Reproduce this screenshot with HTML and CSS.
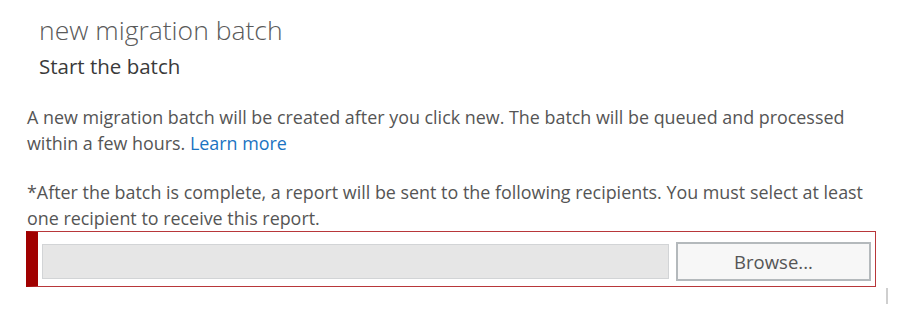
FILE: index.html
```html
<!DOCTYPE html>
<html>
<head>
<meta charset="utf-8">
<link rel="stylesheet" href="styles.css">
</head>
<body>
<div class="page">
  <div class="header">
    <h1 class="title">new migration batch</h1>
    <h2 class="subtitle">Start the batch</h2>
  </div>
  <p class="text">A new migration batch will be created after you click new. The batch will be queued and processed within a few hours. <a class="link" href="#">Learn more</a></p>
  <p class="text note">*After the batch is complete, a report will be sent to the following recipients. You must select at least one recipient to receive this report.</p>
  <div class="picker">
    <div class="field"></div>
    <button class="browse">Browse...</button>
  </div>
  <div class="tail"><span class="tick"></span></div>
</div>
</body>
</html>
```
FILE: styles.css
```css
html, body {
  margin: 0;
  padding: 0;
  background: #ffffff;
}
.page {
  width: 902px;
  height: 314px;
  padding: 0 0 0 26px;
  box-sizing: border-box;
  font-family: "Open Sans", "Noto Sans", sans-serif;
  color: #505050;
  overflow: hidden;
}
.header {
  padding: 12px 0 0 13px;
}
.title {
  margin: 0;
  font-size: 26.5px;
  font-weight: 300;
  line-height: 36px;
  color: #5a5a5a;
}
.subtitle {
  margin: 3px 0 0 0;
  font-size: 20.5px;
  font-weight: 400;
  line-height: 30px;
  color: #3a3a3a;
}
.text {
  margin: 23px 0 0 1px;
  width: 850px;
  font-size: 17.9px;
  line-height: 26px;
  color: #555555;
}
.note {
  margin-top: 23px;
}
.link {
  color: #1a73c2;
  text-decoration: none;
}
.picker {
  display: flex;
  align-items: flex-start;
  width: 850px;
  height: 56px;
  box-sizing: border-box;
  margin-top: 0;
  border: 1px solid #b8373a;
  border-left: 12px solid #a00000;
  padding: 0 4px 0 4px;
  gap: 7px;
}
.field {
  flex: 1;
  height: 35px;
  margin-top: 12px;
  box-sizing: border-box;
  background: #e6e6e6;
  border: 1px solid #d2d4d6;
}
.browse {
  width: 195px;
  height: 39px;
  margin-top: 10px;
  box-sizing: border-box;
  background: #f7f7f7;
  border: 2px solid #b4b9bc;
  font-family: "Open Sans", "Noto Sans", sans-serif;
  font-size: 18.5px;
  color: #555555;
  padding: 0;
}
.tail {
  display: flex;
  justify-content: flex-end;
  width: 862px;
}
.tick {
  display: block;
  width: 2px;
  height: 16px;
  margin-top: 1px;
  background: #cfcfcf;
}
```
